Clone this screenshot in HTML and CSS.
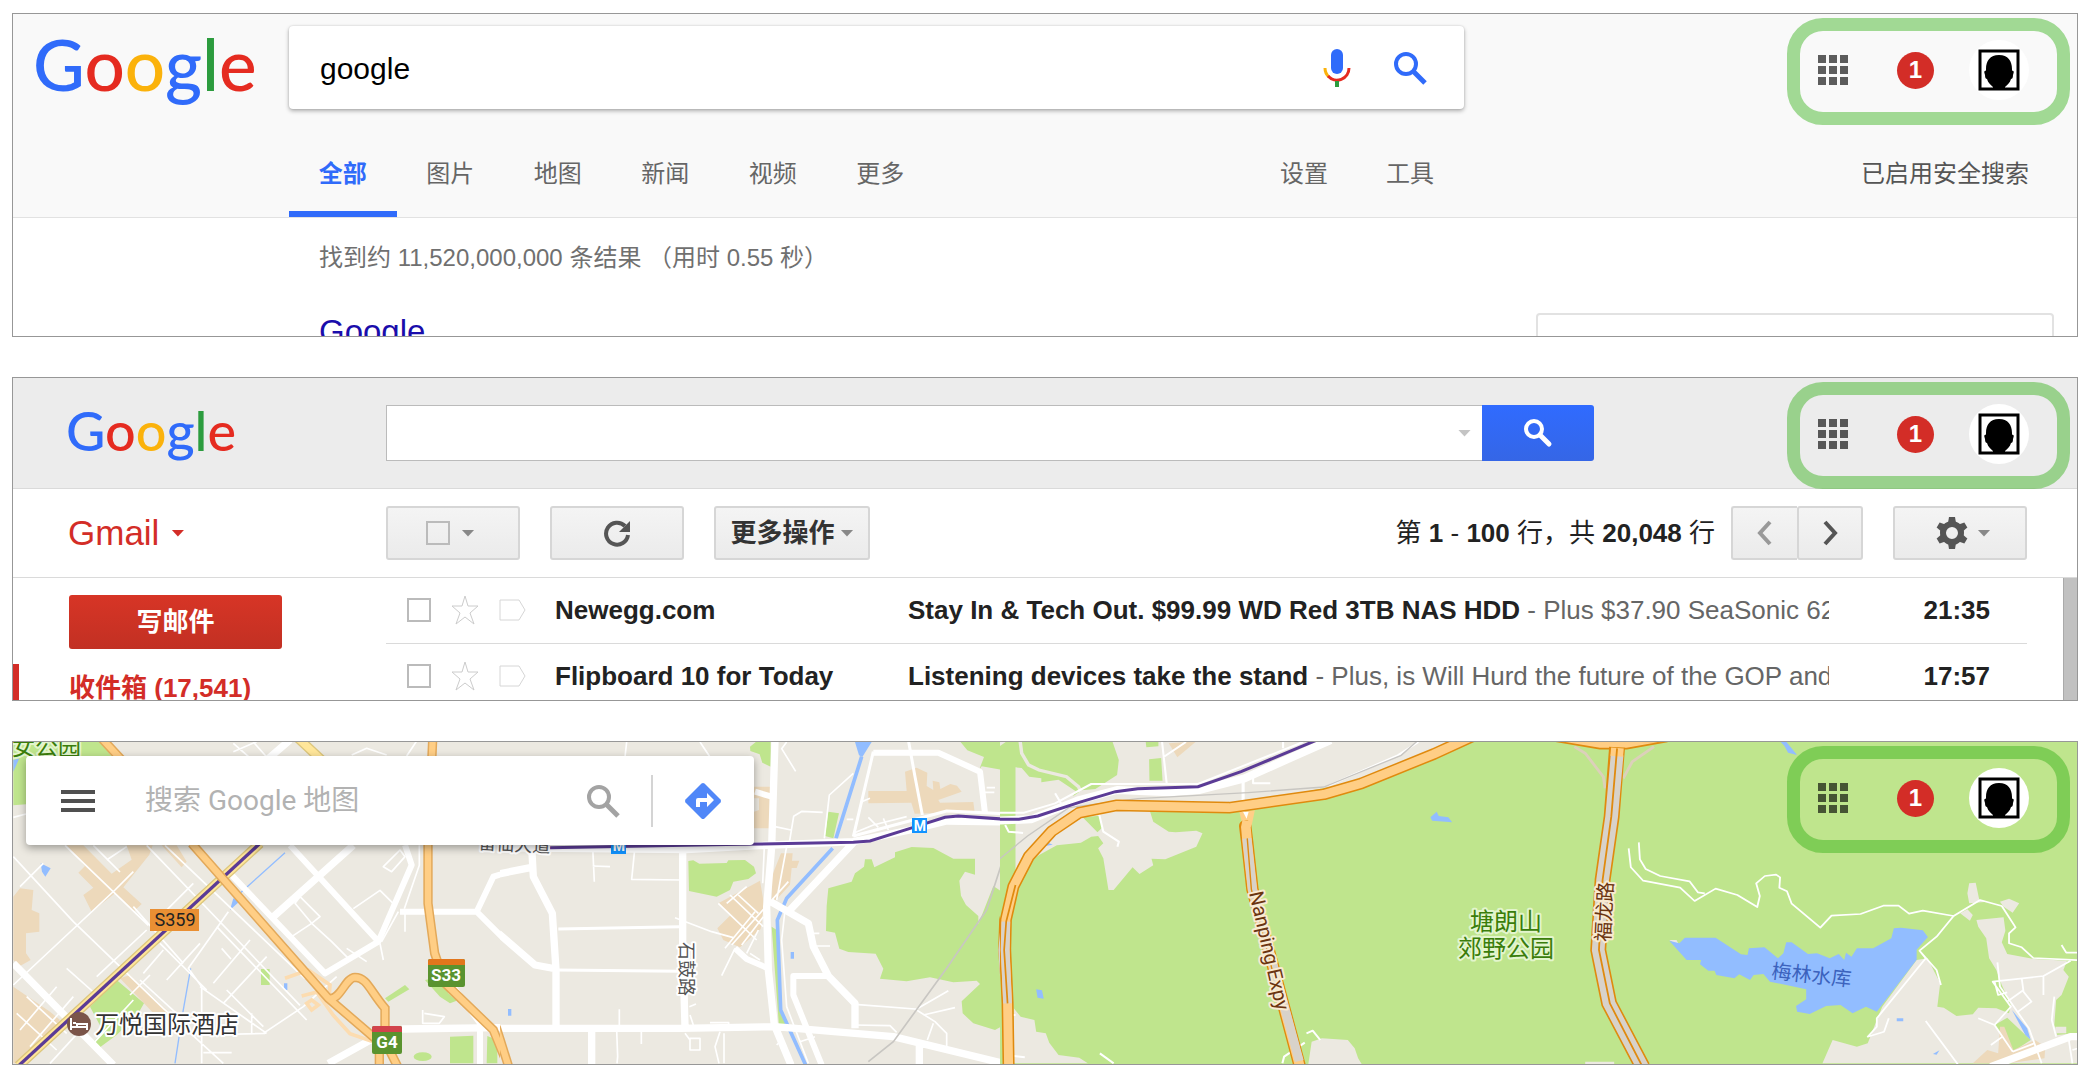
FILE: index.html
```html
<!DOCTYPE html>
<html lang="zh-CN">
<head>
    <meta charset="UTF-8">
    <meta name="viewport" content="width=device-width, initial-scale=1.0">
    <title>Google</title>
    <link rel="stylesheet" href="styles.css">
</head>
<body>
    <!-- Search -->
    <section class="panel search-panel">
        <header class="search-header">
            <div class="search-top">
                <a class="logo" href="#" aria-label="Google"><span class="blue">G</span><span class="red">o</span><span class="yellow">o</span><span class="blue">g</span><span class="green">l</span><span class="red">e</span></a>
                <form class="search-box">
                    <input type="text" value="google" aria-label="搜索">
                    <button type="button" aria-label="语音搜索">
                        <svg width="28" height="40" viewBox="0 0 28 40">
                            <rect x="8" y="1" width="12" height="25" rx="6" fill="#306bfa"/>
                            <path d="M2 20a12 12 0 0 0 4 9" fill="none" stroke="#fbb20b" stroke-width="3"/>
                            <path d="M5 28a12 12 0 0 0 21-8" fill="none" stroke="#e52b20" stroke-width="3"/>
                            <path d="M14 33v6" stroke="#2c9c3e" stroke-width="4"/>
                        </svg>
                    </button>
                    <button type="submit" aria-label="搜索">
                        <svg width="34" height="34" viewBox="0 0 34 34" fill="none" stroke="#306bfa">
                            <circle cx="13" cy="13" r="10" stroke-width="4"/>
                            <path d="M20 20l12 12" stroke-width="5"/>
                        </svg>
                    </button>
                </form>
            </div>
            <nav class="search-nav">
                <div class="tabs">
                    <a class="active" href="#">全部</a>
                    <a href="#">图片</a>
                    <a href="#">地图</a>
                    <a href="#">新闻</a>
                    <a href="#">视频</a>
                    <a href="#">更多</a>
                </div>
                <div class="tools">
                    <a href="#">设置</a>
                    <a href="#">工具</a>
                </div>
                <a class="safe" href="#">已启用安全搜索</a>
            </nav>
        </header>
        <div class="results">
            <div class="results-main">
                <p>找到约 11,520,000,000 条结果 （用时 0.55 秒）</p>
                <a class="result-title" href="#">Google</a>
            </div>
            <aside class="side-card"></aside>
        </div>
        <div class="account">
            <button class="apps" aria-label="应用"><i></i><i></i><i></i><i></i><i></i><i></i><i></i><i></i><i></i></button>
            <a class="badge" href="#">1</a>
            <button class="avatar" aria-label="帐号"><svg width="42" height="42" viewBox="0 0 42 42"><use href="#face"/></svg></button>
        </div>
    </section>

    <!-- Gmail -->
    <section class="panel mail-panel">
        <header class="mail-header">
            <a class="logo small" href="#" aria-label="Google"><span class="blue">G</span><span class="red">o</span><span class="yellow">o</span><span class="blue">g</span><span class="green">l</span><span class="red">e</span></a>
            <form class="mail-search">
                <div class="mail-input">
                    <input type="text" aria-label="搜索邮件">
                    <button type="button" class="caret light" aria-label="搜索选项"></button>
                </div>
                <button type="submit" class="mail-submit" aria-label="搜索">
                    <svg width="30" height="30" viewBox="0 0 30 30" fill="none" stroke="#fff">
                        <circle cx="11" cy="11" r="8" stroke-width="4"/>
                        <path d="M17 17l9 9" stroke-width="5" stroke-linecap="round"/>
                    </svg>
                </button>
            </form>
        </header>
        <div class="toolbar">
            <button class="gmail">Gmail<span class="caret red-caret"></span></button>
            <div class="tool-btn wide select">
                <input type="checkbox" aria-label="全选">
                <button class="caret" aria-label="选择"></button>
            </div>
            <button class="tool-btn wide" aria-label="刷新">
                <svg width="28" height="28" viewBox="0 0 28 28">
                    <path d="M25 16a11 11 0 1 1-3-9" fill="none" stroke="#555" stroke-width="4"/>
                    <path d="M27 2v11H16z" fill="#555"/>
                </svg>
            </button>
            <button class="tool-btn more">更多操作<span class="caret"></span></button>
            <p class="count">第 <b>1</b> - <b>100</b> 行，共 <b>20,048</b> 行</p>
            <div class="pager">
                <button class="tool-btn" aria-label="上一页"><svg width="18" height="26" viewBox="0 0 18 26"><path d="M14 2L4 13l10 11" fill="none" stroke="#999" stroke-width="4"/></svg></button>
                <button class="tool-btn" aria-label="下一页"><svg width="18" height="26" viewBox="0 0 18 26"><path d="M4 2l10 11L4 24" fill="none" stroke="#555" stroke-width="4"/></svg></button>
            </div>
            <button class="tool-btn wide gear" aria-label="设置">
                <svg width="32" height="32" viewBox="-16 -16 32 32">
                    <circle r="9" fill="none" stroke="#555" stroke-width="6"/>
                    <g fill="#555">
                        <path id="tooth" d="M-4 -10L-3 -16H3L4 -10z"/>
                        <use href="#tooth" transform="rotate(60)"/>
                        <use href="#tooth" transform="rotate(120)"/>
                        <use href="#tooth" transform="rotate(180)"/>
                        <use href="#tooth" transform="rotate(240)"/>
                        <use href="#tooth" transform="rotate(300)"/>
                    </g>
                </svg>
                <span class="caret"></span>
            </button>
        </div>
        <div class="mail-body">
            <aside class="mail-side">
                <button class="compose">写邮件</button>
                <a class="inbox" href="#">收件箱 (17,541)</a>
            </aside>
            <div class="mail-rows">
                <table class="mail-list">
                    <colgroup><col class="c-check"><col class="c-star"><col class="c-tag"><col class="c-from"><col><col class="c-time"></colgroup>
                    <tr>
                        <td class="check"><input type="checkbox" aria-label="选择 Newegg.com"></td>
                        <td><svg class="star" width="28" height="30" viewBox="0 0 28 30"><path id="star" d="M14 1l3 10h10l-8 7 4 11-9-7-9 7 4-11-8-7h10z" fill="#fff" stroke="#ccc"/></svg></td>
                        <td><svg class="tag" width="28" height="22" viewBox="0 0 28 22"><path id="tag" d="M1 1h19l6 10-6 10H1z" fill="#fff" stroke="#d6d6d6"/></svg></td>
                        <td class="from">Newegg.com</td>
                        <td class="subject"><b>Stay In &amp; Tech Out. $99.99 WD Red 3TB NAS HDD</b> - Plus $37.90 SeaSonic 62</td>
                        <td class="time">21:35</td>
                    </tr>
                    <tr>
                        <td class="check"><input type="checkbox" aria-label="选择 Flipboard"></td>
                        <td><svg class="star" width="28" height="30" viewBox="0 0 28 30"><use href="#star"/></svg></td>
                        <td><svg class="tag" width="28" height="22" viewBox="0 0 28 22"><use href="#tag"/></svg></td>
                        <td class="from">Flipboard 10 for Today</td>
                        <td class="subject"><b>Listening devices take the stand</b> - Plus, is Will Hurd the future of the GOP and</td>
                        <td class="time">17:57</td>
                    </tr>
                </table>
            </div>
            <div class="scrollbar"></div>
        </div>
        <div class="account">
            <button class="apps" aria-label="应用"><i></i><i></i><i></i><i></i><i></i><i></i><i></i><i></i><i></i></button>
            <a class="badge" href="#">1</a>
            <button class="avatar" aria-label="帐号"><svg width="42" height="42" viewBox="0 0 42 42"><use href="#face"/></svg></button>
        </div>
    </section>

    <!-- Maps -->
    <section class="panel map-panel">
        <svg class="map" viewBox="13 742 2064 322" preserveAspectRatio="xMinYMin slice">
            <defs>
                <g id="face">
                    <rect x="2" y="2" width="38" height="38" fill="#fff" stroke="#000" stroke-width="3"/>
                    <path d="M21 6c9 0 13 6 13 14 0 1 0 2 1 2 1 0 1 1 0 4 0 3-1 4-2 4-1 4-4 6-6 8v2H15v-2c-2-2-5-4-6-8-1 0-2-1-2-4-1-3-1-4 0-4 1 0 1-1 1-2 0-8 4-14 13-14z"/>
                </g>
            </defs>

            <!-- west tile -->
            <svg x="0" y="730" width="500" height="348" viewBox="0 0 1500 1044">
                <rect class="land" width="1500" height="1044"/>
                <g class="urban">
                    <path d="M200 346h50l85 85 60-42-15-43h78l-10 28-48 60-30 38 55 50-25 23-55-55-70 55-25-50 30-22-45-45 20-20z"/>
                    <path d="M485 346h45l30 49-15 17z"/>
                    <path d="M40 500l20-25 40 5-5 60 23 10v55l-40 5v60l14 20-32 18-20-18z"/>
                    <path d="M360 745l30-10 120 115-30 20z"/>
                    <path d="M40 770l110 75 30 25-50 60-70 70H40z"/>
                </g>
                <g class="park">
                    <path d="M40 30h258l45 60H78v133l-38 3z"/>
                    <path d="M350 750l82 70-17 30-65 65-50 37-20-17 30-30-40-75z"/>
                    <path d="M783 717h26v48h-26zM1155 805l60-40 13 13-63 37zM1275 750l45-10 25 50 25 22-20 8-30-20zM1350 920l70-3v83h-70zM1462 918l30 12v70h-32z"/>
                    <ellipse cx="1268" cy="980" rx="27" ry="13"/>
                </g>
                <g class="water">
                    <path d="M122 400l30 15-16 25-10-15zM690 540l10-35 20 8zM852 760h10v20h-10zM40 90l18-5-18 40z"/>
                    <path class="stream" stroke-width="4" d="M855 368L720 490M572 715L548 850 525 1000"/>
                </g>
                <g class="street" stroke-width="5">
                    <path d="M40 380l180 195 270 260 180 165M195 346l250 240M440 346l460 480M495 346l420 400M130 400L60 470M40 765l305-285M345 480l55-55M280 346l80 80M320 390l60-40M440 600l-150 140M480 640l140 140M580 460l-90 90M650 590l270 280M600 640l-100 110M685 545L565 715l40 55v230M550 700l-150-170M600 770l200 140M610 915l185-5M750 630l-110 130M800 680l-130 140M680 780l110 110M790 910l120-80 100-90M610 968h85M755 850v60M665 655l28 32"/>
                    <path d="M50 850l120 110M80 800l120 110M90 950l130-150M60 900l110-130M150 1000l110-120M200 715l90 80M420 750l120 110M390 795l60-60M280 940l120-130M490 660l-60 70"/>
                    <path d="M40 262l38-10M700 65l70-30M700 40l80 70M760 36l40 45M1055 75l45-20 60 20M1220 78l30-45M1060 536l80-55 40 40M875 620l60-40 60 55 50 50M1040 655l60 40M1140 640l10 50M1195 545l-50 90M1215 545v60M900 500l60 60-25 20-50-60zM1150 410l50-50 15 20-40 45zM1258 346v60l-45 130M1268 840v40h50l15-20-60-10"/>
                </g>
                <g class="street">
                    <path stroke-width="22" d="M40 700l300 305M985 1000l130-72M870 30l-70 60M1205 897l355-5M1060 346L820 560"/>
                    <path stroke-width="18" d="M690 430l285 300 160-95 100-230-20-60M870 346l270 294M1200 545h230l130 130M1430 545l50-105 80-25M1360 770l80 110v125"/>
                </g>
                <g fill="none">
                    <path stroke="#fcdcb0" stroke-width="11" d="M855 745l70-25 65 45-3 40M905 798l45-12 50 70 50 55 70 24M920 820l15 20 20-15-20-15z"/>
                    <path class="yellow-case" d="M780 340L55 1008M895 25l75 70"/>
                    <path class="yellow-fill" d="M780 340L55 1008M895 25l75 70"/>
                    <path class="metro" stroke-width="10" d="M780 340L55 1008"/>
                    <g id="west-hw">
                        <path class="hw-soft" d="M305 25l60 65M575 340l410 465 140 120M985 805c35 10 50-62 80-63 35 0 45 40 90 93v70M1298 30l-14 316v174l20 150 31 90 145 140 45 110M1138 960v50M1163 950l30 60"/>
                        <path class="hw-soft-fill" d="M305 25l60 65M575 340l410 465 140 120M985 805c35 10 50-62 80-63 35 0 45 40 90 93v70M1298 30l-14 316v174l20 150 31 90 145 140 45 110M1138 960v50M1163 950l30 60"/>
                    </g>
                </g>
            </svg>

            <!-- centre tile -->
            <svg x="500" y="730" width="500" height="348" viewBox="0 0 1500 1044">
                <rect class="land" width="1500" height="1044"/>
                <g class="urban">
                    <path d="M1105 183h115l-5-58 35-12 32 15-2 40 20 12-2-28 20 5 3 20 30-15 20 5 14 18-70 25 5 8 100-2 4 30-180 5-10-33-129 2zM762 170h48v125h-48v-50l15-5v-35h-15zM815 440l28-70h35l-2 22h22l-8 22h-15l-5 50-55 60zM655 520l125-68 12 70-10 75-62 55-50-22-18-35 40-40z"/>
                </g>
                <g class="park">
                    <path d="M750 50l20-16h42v76l-25-12-8-25-28-10zM985 245l32 5-17 75-25-7zM565 393l15-2 18 10 82-2 5-8 50-1 27 20 6 20-23 17-45 8-10 25-40 20-83-17z"/>
                    <path d="M985 475l70-20 10-25 27-20 3-22h20l8 24 62-30v-15l50-16 65 3 60 32h65v48l-30-9-17 27 5 45 15 28 37 33v25l45-115 30 20 15 390-40 22-65-20-32-30-3-36 55-52-10-10-70 5-70-15-70 12-80-8 10-30-23-45-82-5-27-10-13-48-27-5 2-75z"/>
                    <path d="M1380 34h125v85l-60-10-8 12 15-40-50-20zM815 590l15 10 12 250 25 38-30 2z"/>
                </g>
                <g class="water">
                    <path d="M1065 36h50l-28 45-10-5zM872 666h10v20h-10zM24 837h10v20h-10z"/>
                    <path class="stream" stroke-width="11" d="M1085 80l-77 245M998 355L860 505l-28 65 10 270 75 165"/>
                </g>
                <g class="street" stroke-width="5">
                    <path d="M380 36l-5 45M600 36l30 45M860 36l-15 20 42 68M1060 130l-72 65-15 130M968 247l-62-3-25 15-14 85M825 290l48 10M278 350l5 105M278 408l52 2M405 350l-10 98 150 2M793 350l-5 110M860 350l-30 160M525 563l110 42 65 18M655 520l115 110M690 495l100 95M715 495l60 55M765 545l-90 110M865 455l-170 190M790 560l-65 85M680 520l60-50M775 600l-35 70M705 655l-40 82M780 690l-30-20"/>
                    <path d="M855 540l-10 90 15 200 65 170M940 610h18M945 648h45M1065 823l180 14 60 38 35 35v40M1245 840l100-58M1270 855l95-22M1300 880l-18 50M1060 885l110 2 20 20M358 838v60M424 900v42M350 900l3 80-2 20M555 910l15 20M570 925h30v35h-30zM630 878h56v20M660 905l-15 45 12 50M672 910v90M568 830l20-8M570 855l10 30M1060 310l60-25 100-25M1105 262l30 30M1150 265l15 35M1085 215l25-10M1040 268h20M1515 290l5 15h45M1460 173h25M1455 187h28M900 935l45-15M830 945l10-10"/>
                </g>
                <g class="street">
                    <path stroke-width="9" d="M175 597l365-7M170 720l370 4M1060 320l60-255M1225 30l20 110 22 115M1060 318l280-75 220 10"/>
                    <path stroke-width="18" d="M705 655l35 32 62 27M985 738H880v57l85 210M1120 68h195l125 57 15 125M765 185l50 15"/>
                    <path stroke-width="22" d="M825 30l-10 320-15 180 5 190 18 165 50 120M-5 895h545l285-5 355 30 330 80M95 350l5 90 57 110 11 170v180M548 350v290l7 250M-5 432l100-20M-5 610l110 95 65 12M1060 338L870 540M812 515l113 65 15 70 45 88 80 82v75M1258 935v70M275 905v100M-5 353l565 6 255-14 245-10 170-35 110-27 220 3"/>
                </g>
                <path d="M1560 340l-50 45-50 155-120 175-160 220-75 60" fill="none" stroke="#c8c6c2" stroke-width="5"/>
                <path class="metro" stroke-width="9" d="M150 353l570-10 340-6 50-4 130-41 95-30 40-4 145 10 40-3"/>
                <path class="hw-case" d="M1580 380l-40 85-25 105-3 90 12 160 4 190"/>
                <path class="hw-fill" d="M1580 380l-40 85-25 105-3 90 12 160 4 190"/>
                <path d="M1512 575l-8 85 10 160" fill="none" stroke="#d8d2ca" stroke-width="18"/>
                <path class="hw-soft" d="M-12 890l38 120"/>
                <path class="hw-soft-fill" d="M-12 890l38 120"/>
            </svg>

            <!-- park tile -->
            <svg x="1000" y="730" width="520" height="348" viewBox="0 0 1510 1044" preserveAspectRatio="none">
                <rect class="park" width="1510" height="1044"/>
                <path class="land" d="M325 30h995l-260 120-400 80-225 12 10 33 45 30 20 2 60-5 18 8-18 40-90 38-40-2 5 20-40 26-20-20-55 68h-15l-15-95-15-30 15-15-15-22-20 2-30 18-70 8-50 28-70 46V112l18 2 22 26 35 5v12l50-8 50 35-8 15 25-18 40-4 63-42 5-45z"/>
                <path class="land" d="M0 30h25L0 48zM40 835l20 25 40 10 5 35 28 5 10 28 27 37 60 8 25 17H40zM905 935l30-10 75 5 20 25 10 30 12 20H895z"/>
                <path class="park" d="M423 34h37v15l-35 3zM433 88l35-4 4 68h-38zM240 262l50-5 8 35-15 15z"/>
                <path class="urban" d="M490 40l80-6-55 48z"/>
                <path class="water" d="M1250 262l18-17 6 13 28 4 11 15-58-5zM105 778l17 3 5 25-18-3zM125 345l15-7 13 6-22 4z"/>
                <path d="M58 30l5 40 20 35 30 15 80 20 35 30 8 20" fill="none" stroke="#ece9e1" stroke-width="10"/>
                <g class="street">
                    <path stroke-width="24" d="M-5 272l95-4 140-58 110-30 150 7 90-7 130-35L960 30"/>
                    <path stroke-width="6" d="M-5 248h75l90-28 105-58h310L880 36M470 30l14 130M735 130v30h50M822 30v25M540 36l-65 45M285 240l15 65 45 30-4 15M160 190l20 35M15 285l10 20 42 4M45 855h-10M40 978l32 4M1215 36l-60 40-200 90M890 910l18-8 22 28M820 1000l5-20 60-42M290 970l40 30"/>
                    <path stroke-width="9" d="M706 140v120"/>
                </g>
                <path d="M-5 390l85-72 120-85 200-27 320-18 220-17 225-95 50-46" fill="none" stroke="#c8c6c2" stroke-width="4"/>
                <path d="M695 246l45-5-12 60h-20z" fill="#ffcf87"/>
                <path d="M706 246h16l-6 20z" fill="#fff"/>
                <path class="metro" stroke-width="9" d="M-5 268h60l55-10 120-41 105-32 65-9 175-6 125-45L925 28"/>
                <path class="hw-case" d="M1370 20l-110 52-210 88-110 33-275 40-325-7-110 22-80 56-66 75-45 90-22 100-2 90 7 160 3 190"/>
                <path class="hw-fill" d="M1370 20l-110 52-210 88-110 33-275 40-325-7-110 22-80 56-66 75-45 90-22 100-2 90 7 160 3 190"/>
                <g fill="none">
                    <path stroke="#d8d2ca" stroke-width="25" d="M17 575l-2 85 7 160"/>
                    <path stroke="#e08a0e" stroke-width="5" d="M45 465L18 575l-6 85 10 160"/>
                    <path class="nanping-case" d="M712 288l6 50 15 140 140 540"/>
                    <path stroke="#ffce85" stroke-width="28" d="M718 272l-4 20 4 46 15 140 140 540"/>
                    <path stroke="#d8d2ca" stroke-width="26" d="M717 325l16 153 136 515"/>
                    <path stroke="#e08a0e" stroke-width="4" d="M718 325l12 153 60 240"/>
                </g>
            </svg>

            <!-- reservoir tile -->
            <svg x="1520" y="730" width="568" height="348" viewBox="0 0 1568 1044" preserveAspectRatio="none">
                <rect class="park" width="1568" height="1044"/>
                <path class="land" d="M835 1000l28-70 67 20 30-10 25-70 15-40 95-140 30-5 35 75-8 70 18 3 35 25 45-5 15-20 50 2 35 15 5-25-25-60-15-45-20-35-8-60-22-35-5-20 75-8 5 40-10 35 15 35 75 15 90 5-10 28 15 20-20 55-15 15-5 75 8 30 90-10v95zM1240 460l18-2 10 52 22 5-50 5-5-30zM1325 515l25-9 28 14-18 28-25-18zM1215 550l20-12 15 17-8 17zM180 995h80v10h-80zM412 630l20 0 10 20zM1478 890h30v20h-30z"/>
                <path class="park" d="M1310 885l35-22 65 67-50 35z"/>
                <path class="urban" d="M1250 1000l40-40 30 10 5-80h12l25 70 60-30 28 20-2 35-100 15z"/>
                <path class="water" d="M412 632l28 8 15-17h85l70 50 18 2 4-20 43-3 37 33 15-15 8-33h15l45 35 25-2 35 15 25-13 15 18 5-22 15 12 15-25 45 0 50-30 7-30 20-2 60 8 14 20-31 38v30L985 845l-30-15-37 20-33-25-40 3-45 24-35-7-3-17 28-20v-30l-55-13-45-10-18-23-27 3-10 15-30-17-13 12-50-10-5-13-17 0-23-19 3-13h-40zM718 34h16l31 41-25-7-10-20zM1040 865h18v9h-18zM1140 972l18-11-8 13zM1358 840l42 55 10 35-15-15z"/>
                <g class="street" stroke-width="5">
                    <path d="M300 355l6 57 34 40 102 21 40 40 58-37 60 19 55 36 7-33-10-38 24-22 31-4 11 8-2 31 21 11 13 37 79 72 31-36 80-5 63-25h42l29 24 38-9 85 16 73-48 60 18 38 64-18 18v30l35 12 32 32 150 8M328 337l3 51 16 29 40 21 81 16 23 33 19 3"/>
                    <path d="M1197 558l-47 62-47 42 17 23-135 180v25l-25 30 45-15 13-40M1103 662l47 58 12 45M1120 873l90 132M1265 865l45 20 50 80M1310 885l45-55-50-75 140-17 75-46M1318 697l7 73 80 125 35 105M1445 738v57M1475 800l-7 70 12 50M1495 645l13 23h60M1385 745l5 40 22 30-37 30M1310 755l10 40 25-8M1345 815l45-35M1300 945l32-25M1360 965l60-25M1515 930l10 70M1525 960l43-15"/>
                    <path stroke-width="22" d="M1300 1010l170-70 50-20h50"/>
                </g>
                <g fill="none">
                    <path stroke="#dcd0ba" stroke-width="8" d="M150 50l30 20 50 70 5 35M370 50l-60 45-25 50"/>
                    <path d="M90 32l130 24h75l112-22z" fill="#ffce85" stroke="#e08a0e" stroke-width="5"/>
                    <path stroke="#e08a0e" stroke-width="44" d="M268 52l-15 208-25 190-12 210 30 160 92 190"/>
                    <path stroke="#d8d2ca" stroke-width="35" d="M268 75l-15 185-25 190-12 210 30 160 92 190"/>
                    <path stroke="#ffce85" stroke-width="35" d="M269 54l-2 25"/>
                    <path stroke="#e08a0e" stroke-width="5" d="M268 55l-16 205-24 190-10 210 30 160 90 190"/>
                </g>
            </svg>

            <!-- labels -->
            <g class="label">
                <text class="park-label" x="12" y="755" font-size="23">女公园</text>
                <text class="road-label" transform="translate(478 849) rotate(3)" font-size="18">留仙大道</text>
                <text class="road-label" transform="translate(680 942) rotate(90)" font-size="18">石鼓路</text>
                <text class="hw-label" transform="translate(1249 893) rotate(77)" font-size="20">Nanping Expy</text>
                <text class="hw-label" transform="translate(1610 942) rotate(-87)" font-size="20">福龙路</text>
                <text class="park-label" x="1506" y="930" text-anchor="middle" font-size="24">塘朗山</text>
                <text class="park-label" x="1506" y="957" text-anchor="middle" font-size="24">郊野公园</text>
                <text class="lake-label" transform="translate(1771 978) rotate(6)" font-size="20">梅林水库</text>
                <text class="poi-label" x="95" y="1033" font-size="24">万悦国际酒店</text>
            </g>
            <circle cx="79" cy="1024" r="12" fill="#7b5549"/>
            <path d="M71 1018v12M71 1027h16M87 1030v-6h-10v3M73 1023h3" stroke="#fff" stroke-width="2" fill="none"/>
            <g class="shield">
                <rect x="150" y="909" width="49" height="22" fill="#e98f33"/>
                <text x="175" y="926" font-size="18" fill="#222">S359</text>
                <rect x="428" y="959" width="37" height="28" rx="2" fill="#5a932f"/>
                <path d="M428 965v-4q0-2 2-2h33q2 0 2 2v4z" fill="#e2761c"/>
                <text class="white" x="446" y="981" font-size="17">S33</text>
                <rect x="372" y="1026" width="30" height="28" rx="2" fill="#5a932f"/>
                <path d="M372 1032v-4q0-2 2-2h26q2 0 2 2v4z" fill="#d2434b"/>
                <text class="white" x="387" y="1048" font-size="17">G4</text>
                <rect x="912" y="818" width="15" height="15" fill="#1193ff"/>
                <text class="white" x="920" y="831" font-size="14">M</text>
                <rect x="611" y="839" width="15" height="15" fill="#1193ff"/>
                <text class="white" x="619" y="851" font-size="14">M</text>
            </g>
        </svg>
        <form class="map-search">
            <button type="button" class="menu" aria-label="菜单"><i></i><i></i><i></i></button>
            <input type="text" placeholder="搜索 Google 地图" aria-label="搜索 Google 地图">
            <button type="submit" aria-label="搜索">
                <svg width="34" height="34" viewBox="0 0 34 34" fill="none" stroke="#a3a3a3">
                    <circle cx="13" cy="13" r="10" stroke-width="4"/>
                    <path d="M20 20l12 12" stroke-width="5"/>
                </svg>
            </button>
            <button type="button" class="directions" aria-label="路线">
                <svg width="38" height="38" viewBox="0 0 38 38">
                    <path d="M17.500 1.500q1.500-1 3 0l16 16q1 1.500 0 3l-16 16q-1.500 1-3 0l-16-16q-1-1.500 0-3z" fill="#5087f8"/>
                    <path d="M12 25v-7q0-2 2-2h9v-5l7 7-7 7v-5h-7v5z" fill="#fff"/>
                </svg>
            </button>
        </form>
        <div class="account">
            <button class="apps" aria-label="应用"><i></i><i></i><i></i><i></i><i></i><i></i><i></i><i></i><i></i></button>
            <a class="badge" href="#">1</a>
            <button class="avatar" aria-label="帐号"><svg width="42" height="42" viewBox="0 0 42 42"><use href="#face"/></svg></button>
        </div>
    </section>
</body>
</html>
```

FILE: styles.css
```css
* {
    box-sizing: border-box;
}
body {
    margin: 0;
    padding: 13px 10px 13px 12px;
    height: 100vh;
    display: grid;
    grid-template-rows: repeat(3, minmax(0, 1fr));
    gap: 40px;
    background-color: #fff;
    font-family: "Liberation Sans", "Noto Sans CJK SC", sans-serif;
    font-size: 24px;
    line-height: 36px;
    overflow: hidden;
}
a {
    color: inherit;
    text-decoration: none;
}
p {
    margin: 0;
}
button {
    padding: 0;
    border: 0;
    background: none;
    font: inherit;
    color: inherit;
    cursor: pointer;
}
input[type="text"] {
    flex: 1;
    min-width: 0;
    padding: 0;
    border: 0;
    outline: none;
    background: none;
}
input[type="checkbox"] {
    appearance: none;
    width: 24px;
    height: 24px;
    margin: 0;
    border: 2px solid #bbb;
    background-color: #fff;
}
svg {
    display: block;
}
.panel {
    position: relative;
    border: 1px solid #979797;
    overflow: hidden;
}

/* logo */
.logo {
    flex: none;
    width: 276px;
    padding-left: 20px;
    font-family: Lato, sans-serif;
    font-size: 71px;
    font-weight: 500;
    line-height: 76px;
}
.logo.small {
    width: 373px;
    padding: 0 0 4px 53px;
    font-size: 54px;
}
.blue { color: #306bfa; }
.red { color: #e52b20; }
.yellow { color: #fbb20b; }
.green { color: #2c9c3e; }

/* highlighted account box */
.account {
    position: absolute;
    top: 4px;
    right: 7px;
    display: flex;
    align-items: center;
    padding: 9px 28px 12px 18px;
    border: 13px solid rgba(44, 174, 14, 0.43);
    border-radius: 36px;
}
.apps {
    display: grid;
    grid-template-columns: repeat(3, 8px);
    gap: 3px;
    margin-right: 49px;
}
.apps i {
    height: 8px;
    background-color: rgba(0, 0, 0, 0.63);
}
.badge {
    width: 37px;
    height: 37px;
    margin-right: 35px;
    border-radius: 50%;
    background-color: #d32d27;
    color: #fff;
    font-weight: bold;
    font-size: 24px;
    line-height: 36px;
    text-align: center;
}
.avatar {
    width: 60px;
    height: 60px;
    padding: 9px;
    border-radius: 50%;
    background-color: #fff;
}

/* search */
.search-header {
    background-color: #f9f9f9;
    border-bottom: 1px solid #e2e2e2;
}
.search-top {
    display: flex;
    padding-top: 12px;
}
.search-box {
    flex: 0 1 1175px;
    display: flex;
    align-items: center;
    gap: 42px;
    height: 83px;
    padding: 0 37px 0 31px;
    border-radius: 4px;
    background-color: #fff;
    box-shadow: 0 2px 4px rgba(0, 0, 0, 0.3), 0 0 2px rgba(0, 0, 0, 0.15);
}
.search-box input {
    padding-top: 2px;
    font-family: inherit;
    font-size: 30px;
    color: #000;
}
.search-nav {
    display: flex;
    padding: 47px 48px 0 276px;
    color: #666;
}
.tabs {
    display: flex;
    width: 645px;
}
.tabs a {
    flex: 1;
    padding-bottom: 19px;
    border-bottom: 6px solid transparent;
    text-align: center;
}
.tabs .active {
    border-color: #306bfa;
    color: #306bfa;
    font-weight: bold;
}
.tools {
    display: flex;
    gap: 58px;
    margin-left: 346px;
}
.safe {
    margin-left: auto;
    color: #555;
}
.results {
    display: flex;
    justify-content: space-between;
    padding: 22px 23px 0 306px;
    color: #707070;
}
.result-title {
    display: block;
    margin-top: 36px;
    font-size: 33px;
    line-height: 40px;
    color: #1a0dab;
}
.side-card {
    width: 518px;
    height: 200px;
    margin-top: 73px;
    border: 2px solid #e2e2e2;
    border-radius: 4px;
}

/* gmail */
.mail-panel {
    color: #222;
    font-size: 26px;
}
.mail-header {
    display: flex;
    align-items: center;
    height: 111px;
    border-bottom: 1px solid #dadada;
    background-color: #ececec;
}
.mail-search {
    flex: 0 1 1208px;
    display: flex;
}
.mail-input {
    flex: 1;
    display: flex;
    align-items: center;
    height: 56px;
    padding: 0 11px;
    border: 1px solid #bbb;
    border-right: 0;
    background-color: #fff;
}
.mail-submit {
    display: grid;
    place-items: center;
    width: 112px;
    border-radius: 0 3px 3px 0;
    background: linear-gradient(#306bff, #3566e6);
}
.caret {
    flex: none;
    width: 13px;
    height: 7px;
    background-color: #888;
    clip-path: polygon(0 0, 100% 0, 50% 100%);
}
.caret.light {
    background-color: #c4c4c4;
}
.caret.red-caret {
    background-color: #d32d27;
}
.toolbar {
    display: flex;
    align-items: center;
    height: 89px;
    padding-right: 50px;
    border-bottom: 1px solid #dadada;
}
.gmail {
    flex: none;
    display: flex;
    align-items: center;
    gap: 12px;
    width: 373px;
    padding-left: 55px;
    font-size: 35px;
    color: #d32d27;
}
.tool-btn {
    flex: none;
    display: flex;
    align-items: center;
    justify-content: center;
    gap: 12px;
    height: 54px;
    margin-right: 30px;
    border: 2px solid #d6d6d6;
    border-radius: 3px;
    background: linear-gradient(#f4f4f4, #ebebeb);
}
.tool-btn input {
    background: none;
}
.tool-btn.wide {
    width: 134px;
}
.tool-btn.select {
    padding-right: 6px;
}
.tool-btn.gear {
    gap: 10px;
    margin-right: 0;
    padding-left: 6px;
}
.tool-btn.more {
    gap: 6px;
    width: 156px;
    font-weight: bold;
    color: #333;
}
.count {
    margin-left: auto;
    margin-right: 16px;
}
.pager {
    display: flex;
    margin-right: 30px;
}
.pager .tool-btn {
    width: 66px;
    margin: 0;
}
.pager .tool-btn:first-child {
    border-right: 0;
    border-radius: 3px 0 0 3px;
}
.mail-body {
    display: flex;
}
.mail-side {
    flex: none;
    width: 373px;
    padding-top: 17px;
}
.compose {
    display: block;
    width: 213px;
    height: 54px;
    margin: 0 0 15px 56px;
    border-radius: 3px;
    background: linear-gradient(#d73526, #c23023);
    color: #fff;
    font-weight: bold;
}
.inbox {
    display: block;
    height: 60px;
    padding: 6px 0 0 50px;
    border-left: 6px solid #d32d27;
    color: #d32d27;
    font-weight: bold;
}
.mail-rows {
    flex: 1;
    min-width: 0;
    margin-right: 36px;
}
.mail-list {
    width: 100%;
    table-layout: fixed;
    border-collapse: collapse;
}
.c-check { width: 65px; }
.c-star { width: 48px; }
.c-tag { width: 56px; }
.c-from { width: 353px; }
.c-time { width: 198px; }
.mail-list td {
    height: 65px;
    padding: 0;
    border-bottom: 1px solid #dadada;
    white-space: nowrap;
    overflow: hidden;
}
.mail-list .check {
    padding-left: 21px;
}
.check input {
    display: block;
}
.from {
    font-weight: bold;
}
.subject {
    color: #666;
}
.subject b {
    color: #222;
}
.mail-list .time {
    padding-right: 37px;
    text-align: right;
    font-weight: bold;
}
.scrollbar {
    width: 14px;
    height: 200px;
    background-color: #c1c1c1;
    border-left: 1px solid #aaa;
}

/* maps */
.map {
    width: 100%;
    height: 100%;
}
.land { fill: #ece9e1; }
.park { fill: #bfe58d; }
.urban { fill: #edd9bb; }
.water { fill: #92bdff; }
.stream {
    fill: none;
    stroke: #92bdff;
}
.street {
    fill: none;
    stroke: #fff;
    stroke-linejoin: round;
}
.metro {
    fill: none;
    stroke: #5b3b96;
}
.yellow-case {
    stroke: #dcc67c;
    stroke-width: 30;
}
.yellow-fill {
    stroke: #ffe69a;
    stroke-width: 22;
}
.hw-soft {
    fill: none;
    stroke: #e3a95a;
    stroke-width: 28;
}
.hw-soft-fill {
    fill: none;
    stroke: #ffce85;
    stroke-width: 19;
}
.hw-case {
    fill: none;
    stroke: #e08a0e;
    stroke-width: 35;
    stroke-linejoin: round;
}
.hw-fill {
    fill: none;
    stroke: #ffce85;
    stroke-width: 26;
    stroke-linejoin: round;
}
.nanping-case {
    stroke: #e08a0e;
    stroke-width: 36;
    stroke-linecap: round;
}
.label {
    font-family: Roboto, "Noto Sans CJK SC", sans-serif;
    stroke-width: 4px;
    stroke-linejoin: round;
    paint-order: stroke;
}
.park-label {
    fill: #3a7d0a;
    stroke: #e3f5cd;
}
.road-label {
    fill: #555;
    stroke: #fff;
}
.hw-label {
    fill: #6b3410;
    stroke: #f8ead2;
}
.lake-label {
    fill: #3b62bd;
    stroke: none;
}
.poi-label {
    fill: #333;
    stroke: #fff;
}
.shield {
    font-family: Roboto, sans-serif;
    text-anchor: middle;
}
.shield .white {
    fill: #fff;
    font-weight: bold;
}
.map-search {
    position: absolute;
    top: 14px;
    left: 13px;
    display: flex;
    align-items: center;
    width: 728px;
    max-width: 80%;
    height: 89px;
    padding: 0 32px 0 35px;
    border-radius: 4px;
    background-color: #fff;
    box-shadow: 0 3px 8px rgba(0, 0, 0, 0.35);
}
.map-search input {
    margin-left: 50px;
    font-family: Roboto, "Noto Sans CJK SC", sans-serif;
    font-size: 28px;
}
.map-search input::placeholder {
    color: #b2b2b2;
    opacity: 1;
}
.menu {
    display: grid;
    gap: 5px;
    width: 34px;
}
.menu i {
    height: 4px;
    background-color: #505050;
}
.directions {
    height: 52px;
    margin-left: 31px;
    padding-left: 31px;
    border-left: 2px solid #d4d4d4;
}
```
